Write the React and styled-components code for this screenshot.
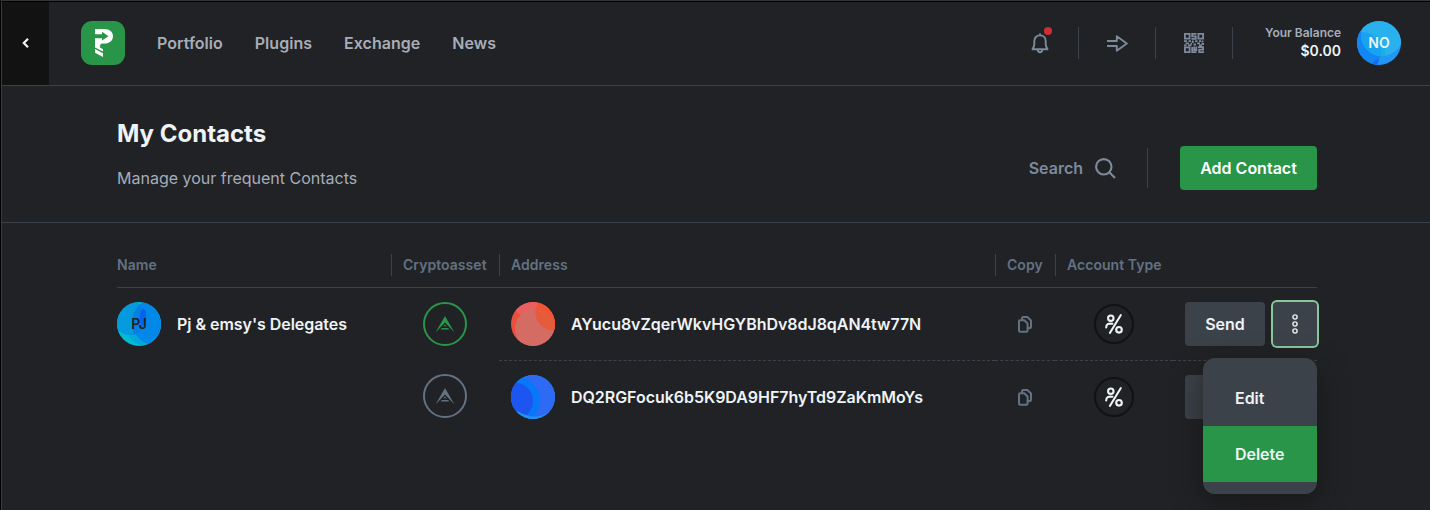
import React from "react";
import styled, { createGlobalStyle } from "styled-components";

const c = {
  bg: "#212225",
  line: "#3c4249",
  green: "#289548",
  panel: "#3c4249",
  muted: "#637282",
  soft: "#7e8a9c",
  nav: "#a5adb9",
  text: "#eef3f5",
  black: "#121213",
};

const GlobalStyle = createGlobalStyle`
  * { box-sizing: border-box; }
  body { margin: 0; background: ${c.bg}; overflow: hidden; }
  button { font: inherit; letter-spacing: inherit; border: 0; padding: 0; cursor: pointer; }
  svg { display: block; flex: none; }
`;

const Window = styled.div`
  height: 510px;
  overflow: hidden;
  background: ${c.bg};
  color: ${c.text};
  font: 600 16px/24px Inter, sans-serif;
  border-top: 1px solid #333538;
  border-left: 1px solid #000;
`;
const WindowInner = styled.div`
  height: 509px;
  border-top: 1px solid #000;
  border-left: 1px solid #3a3b3e;
`;

const Header = styled.header`
  display: flex;
  align-items: center;
  height: 84px;
  padding: 0 29px 1px 0;
  border-bottom: 1px solid ${c.line};
`;
const BackButton = styled.button`
  display: flex;
  align-items: center;
  align-self: flex-start;
  justify-content: center;
  width: 47px;
  height: 83px;
  padding: 0 1px 1px 0;
  background: ${c.black};
`;
const Logo = styled.div`
  width: 44px;
  height: 44px;
  margin: 0 32px;
  border-radius: 11px;
  background: ${c.green};
`;
const Nav = styled.nav`
  display: flex;
  flex: 1;
  gap: 32px;
  color: ${c.nav};
  letter-spacing: 0.03px;
`;
const Actions = styled.div`
  display: flex;
  align-items: center;
  height: 32px;
`;
const Action = styled.div`
  position: relative;
  display: flex;
  align-items: center;
  justify-content: center;
  width: 77px;
  height: 32px;
  color: ${c.soft};
  border-right: 1px solid ${c.line};
`;
const Dot = styled.span`
  position: absolute;
  top: 0;
  left: 42px;
  width: 8px;
  height: 8px;
  border-radius: 50%;
  background: #cf2e32;
`;
const Balance = styled.div`
  width: 76px;
  margin: 0 16px 0 32px;
  padding-bottom: 2px;
  text-align: right;
  font-size: 14px;
  line-height: 18px;
  white-space: nowrap;
`;
const BalanceLabel = styled.div`
  color: ${c.nav};
  font-size: 12px;
`;

const Avatar = styled.div`
  display: grid;
  flex: none;
  width: 44px;
  height: 44px;
  border-radius: 50%;
  overflow: hidden;
  place-items: center;
  font-size: 14px;
  color: ${(p) => p.$color || c.text};
  & > * { grid-area: 1 / 1; }
`;
const Initials = styled.span`
  z-index: 1;
`;

const PageHead = styled.section`
  display: flex;
  justify-content: space-between;
  height: 137px;
  padding: 33px 113px 0 115px;
  border-bottom: 1px solid ${c.line};
`;
const Title = styled.h1`
  margin: 0;
  font-size: 24px;
  line-height: 30px;
  font-weight: 700;
`;
const Subtitle = styled.p`
  margin: 17px 0 0;
  color: ${c.nav};
  font-weight: 400;
`;
const Tools = styled.div`
  display: flex;
  align-items: center;
  height: 44px;
  margin-top: 27px;
`;
const Search = styled.div`
  display: flex;
  align-items: center;
  gap: 12px;
  height: 40px;
  padding-right: 31px;
  margin-right: 32px;
  border-right: 1px solid ${c.line};
  color: ${c.soft};
`;
const AddButton = styled.button`
  width: 137px;
  height: 44px;
  border-radius: 4px;
  background: ${c.green};
  color: #fff;
`;

const Table = styled.main`
  margin: 0 113px 0 115px;
  padding-top: 20px;
`;
const Row = styled.div`
  display: grid;
  grid-template-columns: 274px 108px 496px 60px 118px 144px;
  height: 73px;
  letter-spacing: -0.04px;
`;
const HeadRow = styled(Row)`
  height: 45px;
  padding-top: 11px;
  border-bottom: 1px solid ${c.line};
  color: ${c.muted};
  font-size: 14px;
  line-height: 22px;
`;
const HeadCell = styled.div`
  height: 22px;
  padding-left: ${(p) => (p.$first ? 0 : 11)}px;
  border-left: ${(p) => (p.$first ? "0" : `1px solid ${c.line}`)};
  letter-spacing: 0.04px;
  white-space: nowrap;
`;
const Cell = styled.div`
  display: flex;
  align-items: center;
  justify-content: ${(p) => p.$justify || "flex-start"};
  gap: ${(p) => p.$gap || 16}px;
  padding-left: ${(p) => p.$indent || 0}px;
  padding-bottom: ${(p) => p.$lift || 0}px;
  border-bottom: 1px ${(p) => (p.$dashed ? `dashed ${c.line}` : "solid transparent")};
`;
const Asset = styled.div`
  display: flex;
  align-items: center;
  justify-content: center;
  width: 44px;
  height: 44px;
  border: 2px solid;
  border-radius: 50%;
  color: ${(p) => (p.$active ? c.green : c.muted)};
`;
const TypeBadge = styled.div`
  display: flex;
  align-items: center;
  justify-content: center;
  width: 40px;
  height: 40px;
  border: 2px solid ${c.black};
  border-radius: 50%;
`;
const CellActions = styled(Cell)`
  position: relative;
  gap: 8px;
  padding-left: 12px;
`;
const SendButton = styled.button`
  width: 80px;
  height: 44px;
  border-radius: 4px;
  background: ${c.panel};
  color: ${c.text};
`;
const MoreButton = styled.button`
  display: flex;
  align-items: center;
  justify-content: center;
  width: 44px;
  height: 44px;
  border-radius: 4px;
  background: ${c.panel};
  color: ${c.text};
  box-shadow: ${(p) => (p.$open ? "0 0 0 2px #8ac79b" : "none")};
`;
const Menu = styled.div`
  position: absolute;
  z-index: 2;
  top: 70px;
  right: 0;
  width: 114px;
  padding: 12px 0;
  border-radius: 12px;
  background: ${c.panel};
  box-shadow: 0 10px 30px rgba(18, 18, 19, 0.55);
`;
const MenuItem = styled.div`
  height: 56px;
  padding-left: 32px;
  line-height: 56px;
  background: ${(p) => (p.$selected ? c.green : "transparent")};
`;

const Art = {
  NO: (
    <svg width="44" height="44">
      <rect width="44" height="44" fill="#2196f3" />
      <path d="M0 11H24Q25 36 20 44H0Z" fill="#1287f3" />
      <path d="M15 44Q16 39 22 38L20 44Z" fill="#1769f5" />
      <circle cx="25" cy="14" r="21" fill="#29b1ee" />
      <path d="M4 11C14 10 24 18 25 35C15 35 7 28 4 17Z" fill="#18a3f0" />
      <path d="M15 12C24 15 29 24 28 35L24.5 35C25 26 21 18 15 12Z" fill="#16b0e5" />
    </svg>
  ),
  PJ: (
    <svg width="44" height="44">
      <rect width="44" height="44" fill="#00bcd4" />
      <circle cx="29" cy="24" r="20" fill="#03a9dc" />
      <circle cx="13" cy="16" r="17" fill="#0599dd" />
      <circle cx="38" cy="20" r="23" fill="#0288e8" />
      <path d="M15 20Q16 10 23 3Q29 8 30 16Q27 29 17 32Q15 25 15 20Z" fill="#067fe0" />
      <path d="M26 6Q33 14 25 24Q20 15 26 6Z" fill="#0264ee" />
    </svg>
  ),
  red: (
    <svg width="44" height="44">
      <clipPath id="redLens"><circle cx="43" cy="10" r="18.5" /></clipPath>
      <rect width="44" height="44" fill="#e94f3a" />
      <circle cx="19" cy="-6" r="21" fill="#ea6060" />
      <circle cx="24" cy="27" r="20" fill="#d46c63" />
      <circle cx="43" cy="10" r="18.5" fill="#f45434" />
      <circle cx="24" cy="27" r="20" fill="#e45c3c" clipPath="url(#redLens)" />
    </svg>
  ),
  blue: (
    <svg width="44" height="44">
      <rect width="44" height="44" fill="#2196f3" />
      <circle cx="25" cy="18" r="24" fill="#2e6bf5" />
      <circle cx="6" cy="25" r="23" fill="#0778f8" />
      <circle cx="4" cy="26" r="18" fill="#1c55ef" />
      <path d="M6 36Q25 47 38 37V44H6Z" fill="#2196f3" />
    </svg>
  ),
};

const ArkIcon = () => (
  <svg width="20" height="17" viewBox="0 0 20 17" fill="currentColor">
    <path d="M10 0L19.5 16.5L10 6.5L.5 16.5ZM8.4 10.2L10 8.5L11.6 10.2ZM6.9 11.9H13.1L14.4 13.4H5.6Z" />
  </svg>
);

const CopyIcon = () => (
  <svg width="14" height="17" viewBox="0 0 14 17" fill="none" stroke={c.muted} strokeWidth="2" strokeLinejoin="round">
    <path d="M4 4V2.4Q4 1 5.4 1H9.4L13 4.4V10.4Q13 12 11.4 12H10" />
    <path d="M2.2 4.3H6.3L9.6 7.4V14.5Q9.6 15.8 8.3 15.8H2.2Q1 15.8 1 14.5V5.6Q1 4.3 2.2 4.3Z" />
  </svg>
);

const DelegateIcon = () => (
  <svg width="18" height="20" viewBox="0 0 18 20" fill="none" stroke={c.text} strokeWidth="2.1" strokeLinecap="round">
    <circle cx="5.8" cy="4.2" r="2.7" />
    <path d="M1.2 13.5C1.2 10.3 3 9.2 7.4 9.7M15.7 1.2L5 18.8" />
    <circle cx="14" cy="15.8" r="2.8" />
  </svg>
);

const MoreIcon = () => (
  <svg width="6" height="20" viewBox="0 0 6 20" fill="none" stroke="currentColor" strokeWidth="1.4">
    <circle cx="3" cy="3" r="2.1" />
    <circle cx="3" cy="10" r="2.1" />
    <circle cx="3" cy="17" r="2.1" />
  </svg>
);

const BellIcon = () => (
  <svg width="18" height="21" viewBox="0 0 18 21" fill="none" stroke="currentColor" strokeWidth="1.9" strokeLinejoin="round">
    <path d="M9 .4V2.5M9 2.4C5.5 2.4 3.3 4.8 3.3 8V11.5C3.3 13 2.7 14 1.5 16.2H16.5C15.3 14 14.7 13 14.7 11.5V8C14.7 4.8 12.5 2.4 9 2.4ZM6.8 16.5Q6.8 19.3 9 19.3T11.2 16.5" />
  </svg>
);

const SendIcon = () => (
  <svg width="21" height="17" viewBox="0 0 21 17" fill="none" stroke="currentColor" strokeWidth="1.9" strokeLinejoin="round">
    <path d="M0 6H9.8V1.2L19.8 8.5L9.8 15.8V11H0" />
  </svg>
);

const QrIcon = () => (
  <svg width="20" height="20" viewBox="0 0 20 20" fill="none" stroke="currentColor" strokeWidth="1.8">
    <path d="M.9.9H5.6V5.6H.9ZM14.4.9H19.1V5.6H14.4ZM.9 14.4H5.6V19.1H.9Z" />
    <path d="M12.5.9H8.2V3.3H11.8V5.8H7.5M0 8.2H3M4.5 8.2H7M8.8 7.5V10M11 8.2H13.5M15 8.2H17M18.5 7.5V9.5M1.5 10.3H5M6.5 10.6H8M9.5 11.5H12M13 10.3H16M17.5 11H20M0 12.4H2.5M4 12.4H7.5M15 12.4H18M8.2 14V19.1H12.5M10.2 13.5V17H12.3V13.5M14 14.2H19.1V16.7H15.2V19.1H20" />
  </svg>
);

const NAV = ["Portfolio", "Plugins", "Exchange", "News"];
const COLUMNS = ["Name", "Cryptoasset", "Address", "Copy", "Account Type"];
const CONTACTS = [
  { name: "Pj & emsy's Delegates", address: "AYucu8vZqerWkvHGYBhDv8dJ8qAN4tw77N", art: "red", active: true },
  { address: "DQ2RGFocuk6b5K9DA9HF7hyTd9ZaKmMoYs", art: "blue", active: false },
];

function ContactRow({ name, address, art, active }) {
  return (
    <Row>
      <Cell>
        {name && (
          <>
            <Avatar $color={c.bg}>{Art.PJ}<Initials>PJ</Initials></Avatar>
            <span>{name}</span>
          </>
        )}
      </Cell>
      <Cell $justify="center" $lift={active ? 0 : 2}>
        <Asset $active={active}><ArkIcon /></Asset>
      </Cell>
      <Cell $dashed={active} $indent={12}>
        <Avatar>{Art[art]}</Avatar>
        <span>{address}</span>
      </Cell>
      <Cell $dashed={active} $justify="center"><CopyIcon /></Cell>
      <Cell $dashed={active} $justify="center"><TypeBadge><DelegateIcon /></TypeBadge></Cell>
      <CellActions $dashed={active}>
        {/* the open menu covers the label of the row below it */}
        <SendButton aria-label="Send">{active && "Send"}</SendButton>
        <MoreButton $open={active}><MoreIcon /></MoreButton>
        {active && (
          <Menu>
            <MenuItem>Edit</MenuItem>
            <MenuItem $selected>Delete</MenuItem>
          </Menu>
        )}
      </CellActions>
    </Row>
  );
}

export default function App() {
  return (
    <Window>
      <GlobalStyle />
      <WindowInner>
        <Header>
          <BackButton aria-label="Back">
            <svg width="7" height="10" viewBox="0 0 7 10" fill="none" stroke={c.text} strokeWidth="2.2">
              <path d="M6 .8L1.8 5L6 9.2" />
            </svg>
          </BackButton>
          <Logo>
            <svg width="44" height="44" viewBox="0 0 44 44">
              <path fill="#fff" d="M14 8H23.5C28.5 8 32 11 32 15.2C32 19.5 28.5 22.5 23.5 22.5H21.5Q19 22.5 19 25.5V26.5L22 28.3V30.6L14 26.4V17.3H21V19.5L27.5 15.2L21 10.8V13.2H14ZM14 28L22 32.2V36L14 31.8Z" />
            </svg>
          </Logo>
          <Nav>{NAV.map((n) => <span key={n}>{n}</span>)}</Nav>
          <Actions>
            <Action><BellIcon /><Dot /></Action>
            <Action><SendIcon /></Action>
            <Action><QrIcon /></Action>
          </Actions>
          <Balance>
            <BalanceLabel>Your Balance</BalanceLabel>
            <div>$0.00</div>
          </Balance>
          <Avatar>{Art.NO}<Initials>NO</Initials></Avatar>
        </Header>
        <PageHead>
          <div>
            <Title>My Contacts</Title>
            <Subtitle>Manage your frequent Contacts</Subtitle>
          </div>
          <Tools>
            <Search>
              Search
              <svg width="21" height="21" viewBox="0 0 21 21" fill="none" stroke="currentColor" strokeWidth="2.1">
                <circle cx="8.8" cy="8.8" r="7.7" />
                <path d="M14.3 14.3L20 20" />
              </svg>
            </Search>
            <AddButton>Add Contact</AddButton>
          </Tools>
        </PageHead>
        <Table>
          <HeadRow>
            {COLUMNS.map((n, i) => <HeadCell key={n} $first={i === 0}>{n}</HeadCell>)}
          </HeadRow>
          {CONTACTS.map((row) => <ContactRow key={row.address} {...row} />)}
        </Table>
      </WindowInner>
    </Window>
  );
}
